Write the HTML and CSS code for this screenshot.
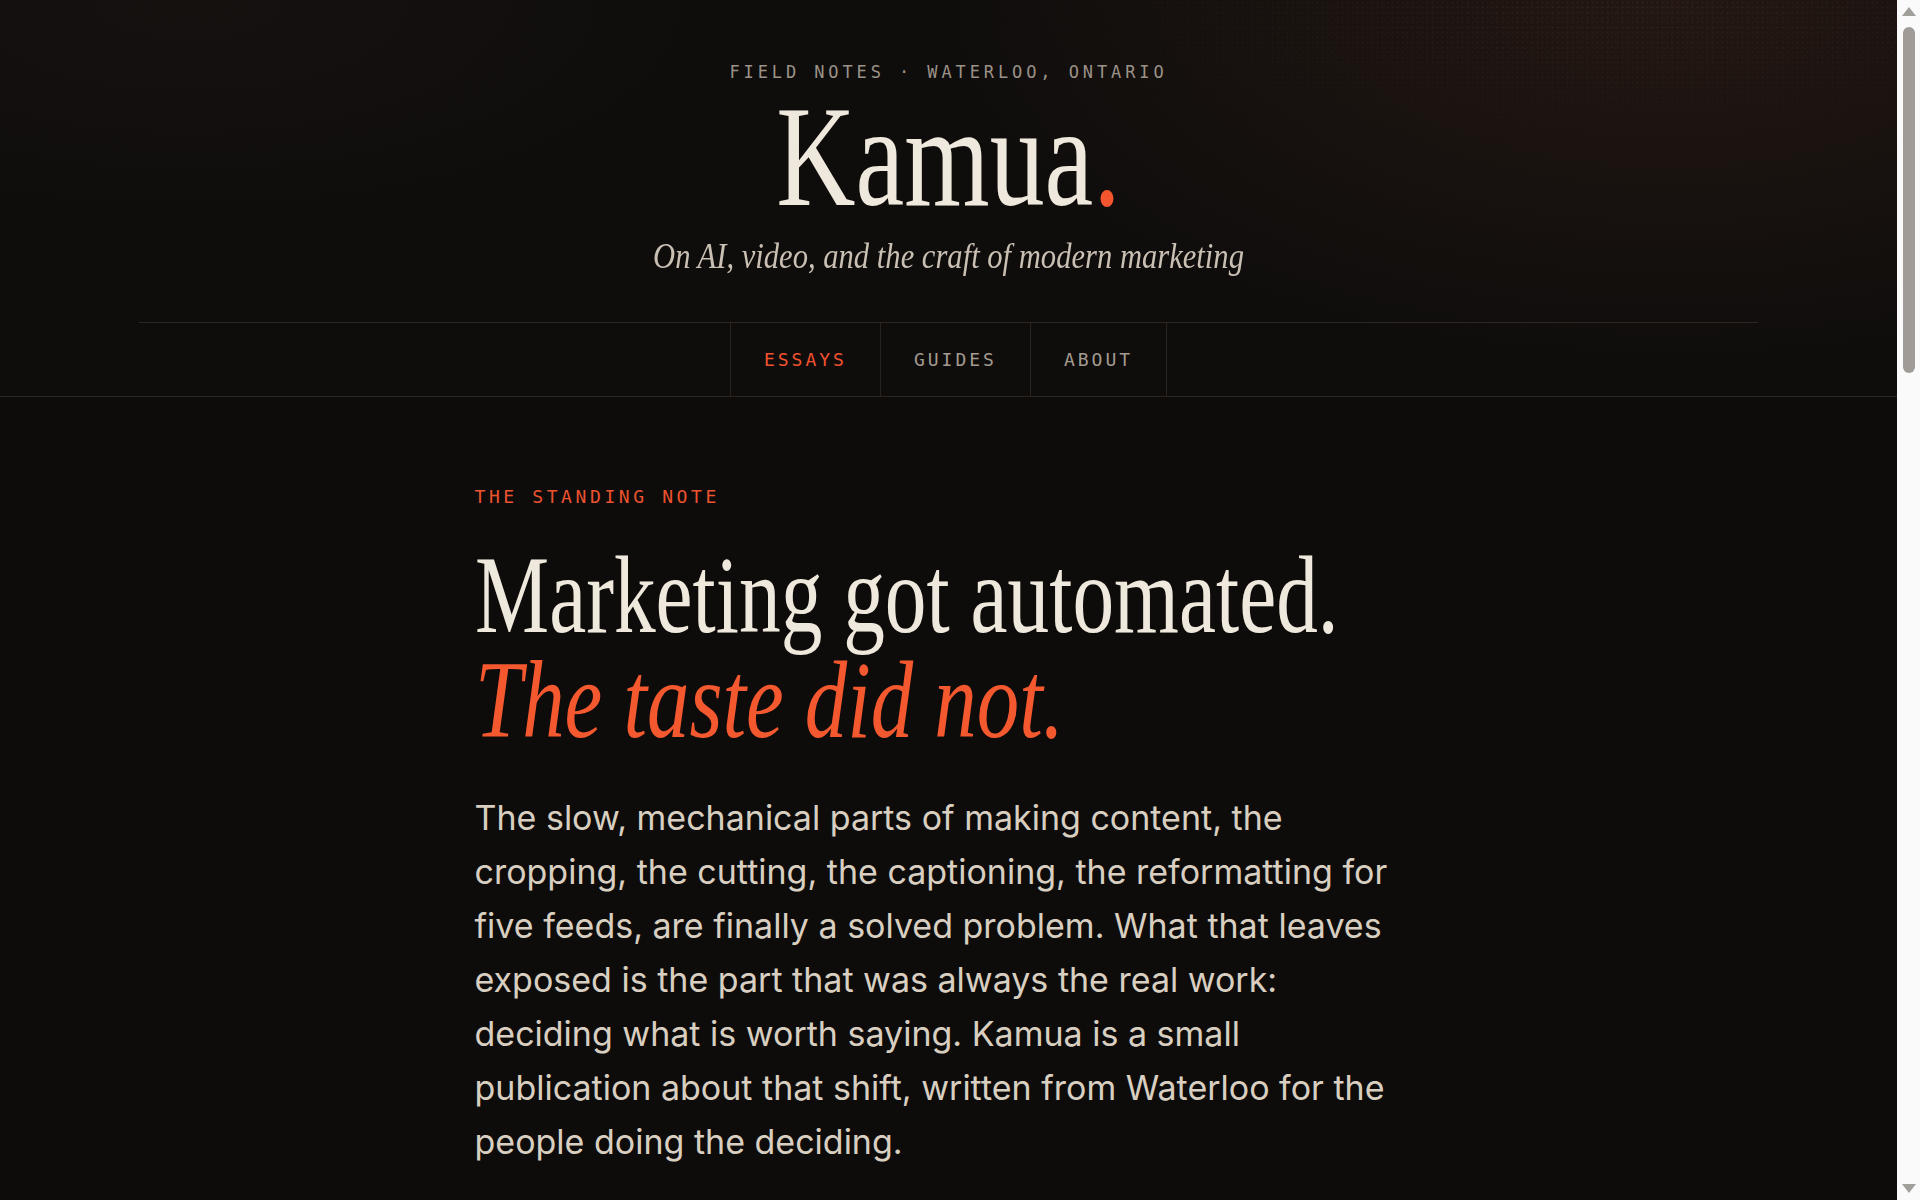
FILE: index.html
```html
<!DOCTYPE html>
<html lang="en">
<head>
<meta charset="utf-8">
<title>Kamua — On AI, video, and the craft of modern marketing</title>
<link rel="stylesheet" href="styles.css">
</head>
<body>
<header class="masthead">
  <div class="masthead-inner">
    <p class="kicker">Field Notes · Waterloo, Ontario</p>
    <h1 class="brand">Kamua<span class="brand-dot">.</span></h1>
    <p class="tagline">On AI, video, and the craft of modern marketing</p>
  </div>
  <nav class="primary-nav">
    <ul class="nav-list">
      <li class="nav-item"><a class="nav-link is-active" href="#essays">Essays</a></li>
      <li class="nav-item"><a class="nav-link" href="#guides">Guides</a></li>
      <li class="nav-item"><a class="nav-link" href="#about">About</a></li>
    </ul>
  </nav>
</header>

<main class="page">
  <section class="column standing-note">
    <p class="eyebrow">The Standing Note</p>
    <h2 class="headline">
      <span class="headline-line">Marketing got automated.</span>
      <em class="headline-line headline-accent">The taste did not.</em>
    </h2>
    <p class="lede">The slow, mechanical parts of making content, the cropping, the cutting, the captioning, the reformatting for five feeds, are finally a solved problem. What that leaves exposed is the part that was always the real work: deciding what is worth saying. Kamua is a small publication about that shift, written from Waterloo for the people doing the deciding.</p>
  </section>

  <section class="column listing" id="essays">
    <p class="eyebrow">Recent Essays</p>
    <article class="entry">
      <p class="entry-meta">No. 14 · Essay</p>
      <h3 class="entry-title">The cut is the argument</h3>
      <p class="entry-text">Editing used to be where the budget went. Now it is where the judgement goes, and the two are not the same job.</p>
    </article>
    <article class="entry">
      <p class="entry-meta">No. 13 · Essay</p>
      <h3 class="entry-title">Five feeds, one idea</h3>
      <p class="entry-text">Reformatting is free. Deciding which version of a story each audience actually needs is not.</p>
    </article>
    <article class="entry">
      <p class="entry-meta">No. 12 · Essay</p>
      <h3 class="entry-title">What the machine can't brief</h3>
      <p class="entry-text">On the brief as the last truly human document in the production chain.</p>
    </article>
    <article class="entry">
      <p class="entry-meta">No. 11 · Essay</p>
      <h3 class="entry-title">Taste is a process, not a gift</h3>
      <p class="entry-text">The teams that keep their edge are the ones who write down why they said no.</p>
    </article>
  </section>

  <section class="column listing" id="guides">
    <p class="eyebrow">Guides</p>
    <article class="entry">
      <p class="entry-meta">Guide · 12 min</p>
      <h3 class="entry-title">Vertical video without the guesswork</h3>
      <p class="entry-text">A practical walkthrough of reframing, captioning and pacing for short-form feeds.</p>
    </article>
    <article class="entry">
      <p class="entry-meta">Guide · 9 min</p>
      <h3 class="entry-title">Building a review loop that scales</h3>
      <p class="entry-text">How small teams keep quality high when output triples overnight.</p>
    </article>
    <article class="entry">
      <p class="entry-meta">Guide · 7 min</p>
      <h3 class="entry-title">Writing briefs a model can follow</h3>
      <p class="entry-text">Clear intent in, usable drafts out: a checklist for the first paragraph of every brief.</p>
    </article>
  </section>

  <section class="column listing" id="about">
    <p class="eyebrow">About</p>
    <p class="entry-text">Kamua is written and edited in Waterloo, Ontario. New pieces arrive when they are ready, not on a schedule.</p>
  </section>
</main>

<footer class="site-footer">
  <p class="footer-text">Kamua · Field Notes · Waterloo, Ontario</p>
</footer>

<div class="scrollbar" aria-hidden="true">
  <span class="sb-arrow sb-arrow-up"></span>
  <span class="sb-thumb"></span>
  <span class="sb-arrow sb-arrow-down"></span>
</div>
</body>
</html>
```

FILE: styles.css
```css
html, body {
  margin: 0;
  padding: 0;
}

body {
  padding-right: 23px;
  background: #0e0c0b;
  color: #d6cdbf;
  font-family: Inter, "Liberation Sans", sans-serif;
}

/* ---------- Masthead ---------- */
.masthead {
  position: relative;
  padding-top: 60px;
  border-bottom: 1px solid #2f261f;
  background:
    radial-gradient(ellipse 55% 130% at 88% 0%, rgba(62, 38, 28, 0.42), rgba(14, 12, 11, 0) 70%),
    radial-gradient(ellipse 40% 80% at 10% 0%, rgba(40, 30, 26, 0.25), rgba(14, 12, 11, 0) 70%),
    #0f0d0c;
  overflow: hidden;
}

.masthead::before {
  content: "";
  position: absolute;
  inset: 0;
  pointer-events: none;
  background-image:
    radial-gradient(circle, rgba(150, 112, 92, 0.16) 0.6px, rgba(0, 0, 0, 0) 1.1px),
    radial-gradient(circle, rgba(150, 112, 92, 0.12) 0.6px, rgba(0, 0, 0, 0) 1.1px);
  background-size: 5px 5px, 7px 7px;
  background-position: 0 0, 2px 3px;
  -webkit-mask-image: radial-gradient(ellipse 35% 40% at 85% 0%, #000, rgba(0, 0, 0, 0) 100%);
  mask-image: radial-gradient(ellipse 35% 40% at 85% 0%, #000, rgba(0, 0, 0, 0) 100%);
}

.masthead-inner {
  position: relative;
  text-align: center;
}

.kicker {
  margin: 0 0 1px;
  font-family: "DejaVu Sans Mono", monospace;
  font-size: 17px;
  line-height: 24px;
  letter-spacing: 3.9px;
  text-transform: uppercase;
  color: #9b9288;
}

.brand {
  margin: 0;
  font-family: "Liberation Serif", serif;
  font-weight: 400;
  font-size: 144px;
  line-height: 144px;
  color: #efe8dc;
  transform: scaleX(0.762);
}

.brand-dot {
  color: #f4552f;
}

.tagline {
  margin: 4px 0 0;
  font-family: "Liberation Serif", serif;
  font-style: italic;
  font-size: 36px;
  line-height: 46.8px;
  color: #c9c0b3;
  transform: scaleX(0.85);
}

.primary-nav {
  position: relative;
  max-width: 1619px;
  margin: 42px auto 0;
  border-top: 1px solid #2f261f;
}

.nav-list {
  list-style: none;
  margin: 0;
  padding: 0;
  display: flex;
  justify-content: center;
}

.nav-item {
  border-left: 1px solid #2a221c;
}

.nav-item:last-child {
  border-right: 1px solid #2a221c;
}

.nav-link {
  display: flex;
  align-items: center;
  height: 73px;
  padding: 0 33px;
  font-family: "DejaVu Sans Mono", monospace;
  font-size: 18px;
  letter-spacing: 3px;
  text-transform: uppercase;
  color: #a39a90;
  text-decoration: none;
}

.nav-link.is-active {
  color: #f0522e;
}

/* ---------- Main ---------- */
.page {
  padding: 88px 0 0;
}

.column {
  width: 948px;
  margin: 0 auto;
}

.eyebrow {
  margin: 0;
  font-family: "DejaVu Sans Mono", monospace;
  font-size: 18px;
  line-height: 24px;
  letter-spacing: 3.6px;
  text-transform: uppercase;
  color: #ec532f;
}

.headline {
  margin: 34px 0 0;
  font-family: "Liberation Serif", serif;
  font-weight: 400;
  font-size: 110px;
  line-height: 105px;
  color: #efe8dc;
}

.headline-line {
  display: block;
  white-space: nowrap;
  transform-origin: left center;
  transform: scaleX(0.758);
}

.headline-accent {
  font-style: italic;
  color: #f4582f;
  transform: scaleX(0.771);
}

.lede {
  margin: 38px 0 0;
  font-size: 34px;
  line-height: 54px;
  color: #d8cfc1;
}

/* ---------- Below the fold ---------- */
.listing {
  padding-top: 200px;
}

.entry {
  padding: 40px 0;
  border-bottom: 1px solid #2a221c;
}

.entry-meta {
  margin: 0 0 14px;
  font-family: "DejaVu Sans Mono", monospace;
  font-size: 15px;
  letter-spacing: 3px;
  text-transform: uppercase;
  color: #9b9288;
}

.entry-title {
  margin: 0 0 14px;
  font-family: "Liberation Serif", serif;
  font-weight: 400;
  font-size: 56px;
  line-height: 1.05;
  color: #efe8dc;
}

.entry-text {
  margin: 0;
  font-size: 24px;
  line-height: 1.6;
  color: #c9c0b3;
}

.site-footer {
  margin-top: 240px;
  padding: 60px 0 80px;
  border-top: 1px solid #2f261f;
  text-align: center;
}

.footer-text {
  margin: 0;
  font-family: "DejaVu Sans Mono", monospace;
  font-size: 15px;
  letter-spacing: 3px;
  text-transform: uppercase;
  color: #8a8178;
}

/* ---------- Window scrollbar (drawn, stays over the page edge) ---------- */
.scrollbar {
  position: fixed;
  top: 0;
  right: 0;
  width: 23px;
  height: 100vh;
  background: #fafafa;
  display: flex;
  flex-direction: column;
  align-items: center;
}

.sb-arrow {
  width: 0;
  height: 0;
  border-left: 7px solid transparent;
  border-right: 7px solid transparent;
}

.sb-arrow-up {
  margin-top: 7px;
  border-bottom: 9px solid #a29e9a;
}

.sb-thumb {
  width: 12px;
  height: 346px;
  margin-top: 11px;
  border-radius: 6px;
  background: #a09b96;
}

.sb-arrow-down {
  margin-top: auto;
  margin-bottom: 7px;
  border-top: 9px solid #a29e9a;
}
```
